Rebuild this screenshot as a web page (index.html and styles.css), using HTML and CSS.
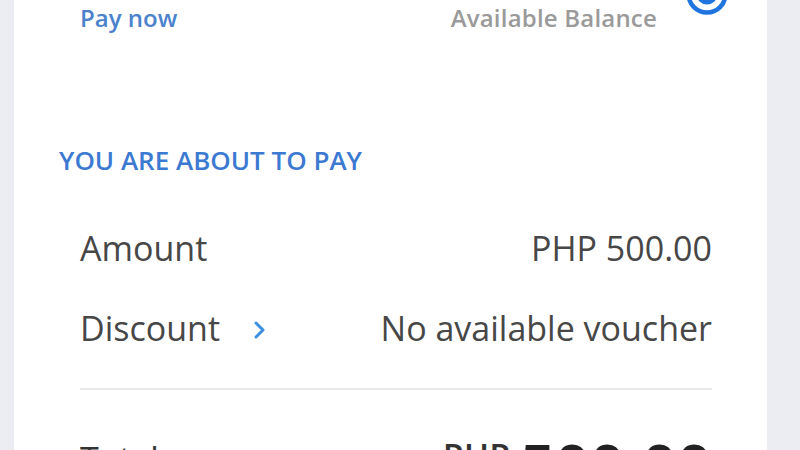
FILE: index.html
```html
<html>
  <head>
    <title>Payment</title>
    <link rel="stylesheet" href="styles.css">
  </head>
  <body>
    <div id="paymentCard">
      <div class="wallet">
        <span class="payNow">Pay now</span>
        <div class="balance">
          <span class="balanceLabel">Available Balance</span>
          <svg class="radio" width="44" height="44" viewBox="0 0 44 44">
            <circle cx="22" cy="22" r="18.5" fill="none" stroke="#1f74e0" stroke-width="4.5"/>
            <circle cx="22" cy="22" r="10.5" fill="#1f74e0"/>
          </svg>
        </div>
      </div>

      <h2 class="sectionTitle">YOU ARE ABOUT TO PAY</h2>

      <div class="summary">
        <div class="row">
          <span class="label">Amount</span>
          <span class="value">PHP 500.00</span>
        </div>
        <div class="row">
          <span class="label">Discount
            <svg class="chevron" width="14" height="20" viewBox="0 0 14 20">
              <polyline points="3,3 10,10 3,17" fill="none" stroke="#3d8fe0" stroke-width="3" stroke-linecap="round" stroke-linejoin="round"/>
            </svg>
          </span>
          <span class="value">No available voucher</span>
        </div>
        <div class="divider"></div>
        <div class="row totalRow">
          <span class="label">Total</span>
          <span class="totalValue">
            <span class="currency">PHP</span>
            <span class="bigAmount">500.00</span>
          </span>
        </div>
      </div>
    </div>
  </body>
</html>
```

FILE: styles.css
```css
body {
  margin: 0;
  background-color: #ececf3;
  font-family: "Open Sans", "Liberation Sans", sans-serif;
  overflow: hidden;
}

#paymentCard {
  margin-left: 14px;
  width: 753px;
  height: 450px;
  overflow: hidden;
  background-color: #ffffff;
}

.wallet {
  display: flex;
  justify-content: space-between;
  padding: 0 38px 0 66px;
  height: 40px;
}

.payNow {
  font-size: 24px;
  font-weight: 600;
  color: #4b82cc;
  line-height: 36px;
}

.balance {
  display: flex;
}

.balanceLabel {
  font-size: 24px;
  font-weight: 600;
  color: #9a9a9a;
  line-height: 36px;
  letter-spacing: 0.2px;
}

.radio {
  margin-top: -28px;
  margin-left: 28px;
}

.sectionTitle {
  margin: 104px 0 0 45px;
  font-size: 26px;
  font-weight: 600;
  color: #3c7ad2;
  line-height: 32px;
}

.summary {
  padding: 0 55px 0 66px;
}

.row {
  display: flex;
  justify-content: space-between;
  align-items: center;
  height: 80px;
  font-size: 34px;
  color: #474747;
}

.row:first-child {
  margin-top: 32px;
}

.label {
  display: flex;
  align-items: center;
}

.chevron {
  margin-left: 33px;
  margin-top: 4px;
}

.divider {
  height: 2px;
  margin-top: 20px;
  background-color: #e8e8e8;
}

/* total sits at the bottom, only the top of it shows above the fold */
.totalRow {
  margin-top: 27px;
  align-items: flex-start;
}

.totalRow .label {
  margin-top: 19px;
  color: #333333;
}

.totalValue {
  display: flex;
  align-items: flex-start;
  color: #222222;
}

.currency {
  font-size: 34px;
  font-weight: 600;
  line-height: 1;
  margin: 22px 10px 0 0;
  color: #333333;
}

.bigAmount {
  font-size: 61px;
  font-weight: 700;
  line-height: 1;
  margin-top: 18px;
}
```
